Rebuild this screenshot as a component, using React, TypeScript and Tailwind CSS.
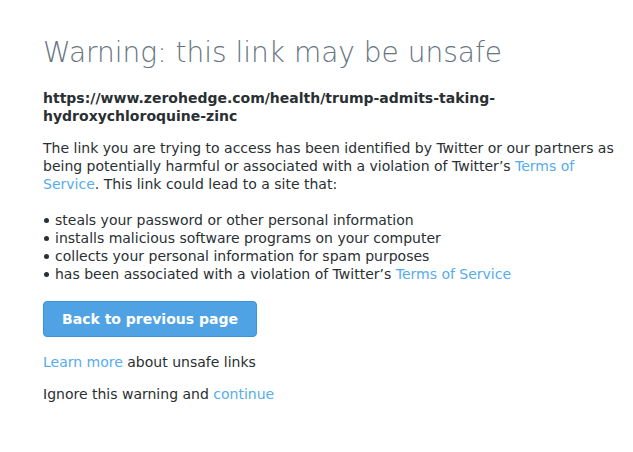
const items = [
  "steals your password or other personal information",
  "installs malicious software programs on your computer",
  "collects your personal information for spam purposes",
];

function Bullet() {
  return <span className="mr-[6px] ml-[1px] mt-[1px] inline-block h-[5px] w-[5px] shrink-0 rounded-full bg-[#292f33]" />;
}

export default function App() {
  return (
    <div className="min-h-[452px] w-full bg-white pl-[43px] pr-[10px] pt-[34px] text-[14px] leading-[18px] text-[#292f33]" style={{ fontFamily: "'DejaVu Sans', sans-serif" }}>
      <h1 className="text-[28px] leading-[38px] text-[#66757f] font-light" style={{ fontFamily: "'DejaVu Sans ExtraLight', 'DejaVu Sans', sans-serif" }}>
        Warning: this link may be unsafe
      </h1>
      <p className="mt-[17px] font-bold break-words">https://www.zerohedge.com/health/trump-admits-taking-<br />hydroxychloroquine-zinc</p>
      <p className="mt-[14px]">
        The link you are trying to access has been identified by Twitter or our partners as being potentially harmful or associated with a violation of Twitter’s{" "}
        <a className="text-[#55acee]">Terms of Service</a>. This link could lead to a site that:
      </p>
      <ul className="mt-[18px]">
        {items.map((t) => (
          <li key={t} className="flex items-center">
            <Bullet />
            <span>{t}</span>
          </li>
        ))}
        <li className="flex items-center">
          <Bullet />
          <span>has been associated with a violation of Twitter’s <a className="text-[#55acee]">Terms of Service</a></span>
        </li>
      </ul>
      <button className="mt-[18px] h-[36px] w-[214px] rounded-[4px] border border-[#3b94d9] bg-[#4fa3e4] text-[14px] font-bold text-white">
        Back to previous page
      </button>
      <p className="mt-[16px]"><a className="text-[#55acee]">Learn more</a> about unsafe links</p>
      <p className="mt-[14px]">Ignore this warning and <a className="text-[#55acee]">continue</a></p>
    </div>
  );
}
